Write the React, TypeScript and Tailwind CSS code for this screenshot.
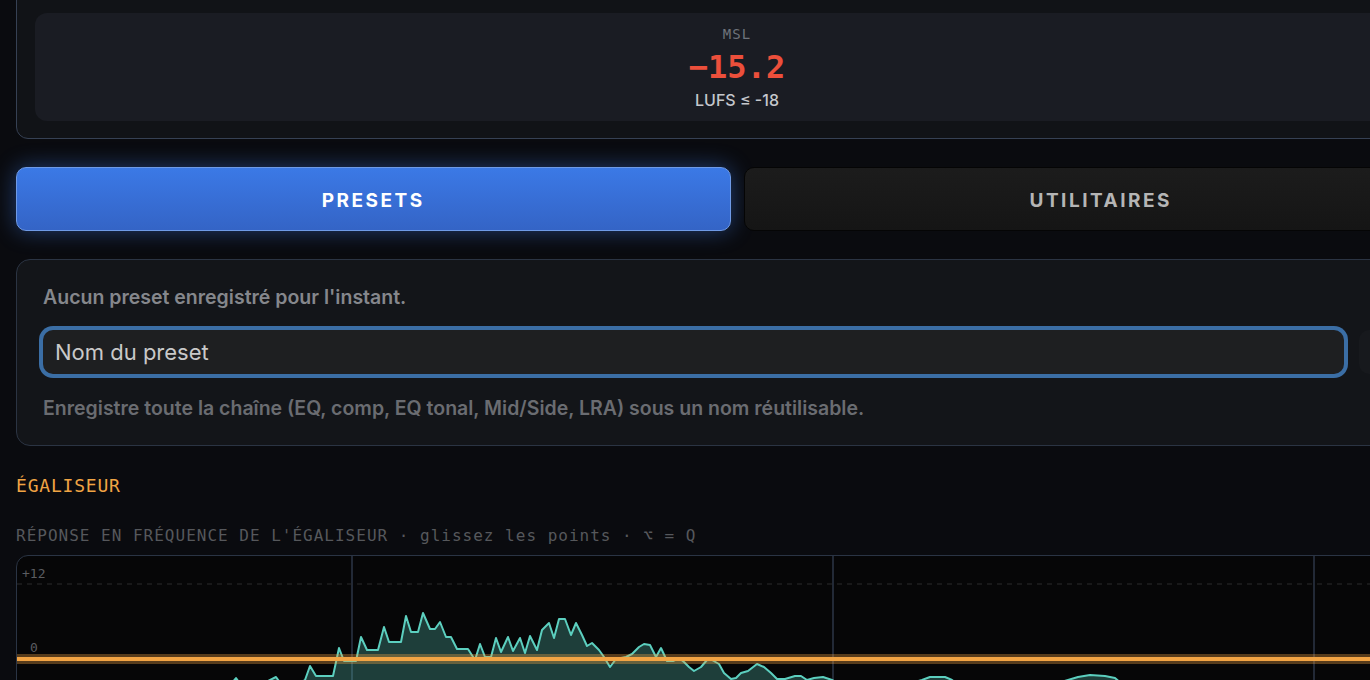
import React from "react";
import { Save } from "lucide-react";

const mono = "font-['DejaVu_Sans_Mono','Liberation_Mono',monospace]";
const sans = "font-['Inter','Noto_Sans',sans-serif]";

// spectrum trace in page-space coordinates (svg viewBox is offset to match)
const spectrum: [number, number][] = [
  [17, 700], [120, 694], [200, 688], [232, 683], [236, 678], [241, 685], [262, 684],
  [276, 677], [281, 684], [300, 683], [305, 680], [310, 666], [316, 676], [333, 676],
  [339, 648], [344, 661], [356, 661], [361, 637], [367, 650], [378, 650], [384, 627],
  [389, 642], [401, 642], [406, 616], [411, 632], [418, 632], [423, 613], [430, 629],
  [435, 629], [440, 622], [446, 637], [451, 637], [457, 649], [468, 649], [475, 660],
  [480, 644], [485, 657], [491, 657], [496, 638], [501, 652], [508, 637], [513, 651],
  [520, 638], [525, 653], [530, 636], [537, 650], [542, 630], [549, 623], [554, 638],
  [559, 619], [565, 619], [571, 635], [576, 623], [582, 635], [587, 646], [592, 643],
  [599, 650], [604, 657], [610, 667], [616, 659], [626, 657], [632, 654], [639, 647],
  [644, 644], [650, 645], [656, 657], [661, 648], [667, 661], [673, 661], [679, 658],
  [684, 662], [689, 667], [694, 671], [701, 667], [707, 660], [712, 660], [719, 664],
  [724, 673], [731, 679], [736, 678], [741, 673], [748, 671], [757, 664], [764, 667],
  [771, 673], [777, 679], [785, 679], [795, 676], [801, 676], [807, 680], [814, 678],
  [823, 677], [832, 680], [840, 684], [900, 686], [922, 680], [930, 677], [945, 677],
  [952, 680], [960, 686], [1040, 688], [1068, 680], [1078, 677], [1090, 675],
  [1105, 676], [1115, 678], [1122, 684], [1170, 690], [1250, 694], [1320, 697], [1460, 700],
];

function EqGraph() {
  const line = spectrum.map(([x, y], i) => `${i ? "L" : "M"}${x} ${y}`).join(" ");
  const area = `${line} L1460 860 L17 860 Z`;
  return (
    <div className="mt-[8px] h-[300px] overflow-hidden rounded-xl border border-[#2a3444] bg-[#060607]">
      <svg width="1440" height="300" viewBox="17 556 1440 300" className="block">
        {[352, 833, 1314].map((x) => (
          <line key={x} x1={x} y1={556} x2={x} y2={856} stroke="#2c3647" strokeWidth={1.5} />
        ))}
        <line x1={17} y1={584} x2={1460} y2={584} stroke="#2a2a2c" strokeDasharray="5 5" />
        <text x={22} y={578} fontSize={13} fill="#5a5c60" fontFamily="DejaVu Sans Mono, monospace">+12</text>
        <text x={30} y={652} fontSize={13} fill="#5a5c60" fontFamily="DejaVu Sans Mono, monospace">0</text>
        <path d={area} fill="#5ccfbf" fillOpacity={0.28} />
        <path d={line} fill="none" stroke="#5ccfbf" strokeWidth={2} strokeLinejoin="round" />
        <line x1={17} y1={659} x2={1460} y2={659} stroke="#f2a444" strokeOpacity={0.35} strokeWidth={10} />
        <line x1={17} y1={659} x2={1460} y2={659} stroke="#f2a444" strokeWidth={4} />
      </svg>
    </div>
  );
}

export default function App() {
  return (
    <div className="h-[680px] w-full overflow-hidden bg-[#0a0b0f]">
      <div className="-mt-[6px] w-[1474px] px-4">
        {/* loudness meter */}
        <div className="rounded-b-xl border border-[#364154] bg-[#111317] px-[18px] pt-[18px] pb-[17px]">
          <div className="flex h-[108px] flex-col items-center rounded-xl bg-[#1a1c23] pt-[13px]">
            <div className={`${mono} text-[14px] leading-[16px] tracking-[1px] text-[#6f737b]`}>MSL</div>
            <div className={`${mono} mt-[7px] text-[32px] font-bold leading-[36px] text-[#ec4f3b]`}>−15.2</div>
            <div className={`${sans} mt-[5px] text-[16px] font-medium leading-[20px] text-[#c5c7cc]`}>LUFS ≤ -18</div>
          </div>
        </div>

        {/* tabs */}
        <div className="mt-[28px] grid grid-cols-2 gap-[13px]">
          <button
            type="button"
            className={`${sans} h-[64px] rounded-[10px] border border-[#6f9ae6] bg-gradient-to-b from-[#3b79e6] to-[#3464c6] pt-[4px] text-[19px] font-bold tracking-[2.5px] text-white shadow-[0_0_22px_rgba(59,121,230,0.45)]`}
          >
            PRESETS
          </button>
          <button
            type="button"
            className={`${sans} h-[64px] rounded-[10px] border border-[#050505] bg-gradient-to-b from-[#1c1c1c] to-[#151515] pt-[4px] text-[19px] font-bold tracking-[2.5px] text-[#b5b5b5]`}
          >
            UTILITAIRES
          </button>
        </div>

        {/* presets panel */}
        <div className={`${sans} mt-[28px] rounded-[14px] border border-[#2b3443] bg-[#131519] px-[26px] py-[24px]`}>
          <p className="text-[19.5px] font-semibold leading-[26px] text-[#85878c]">Aucun preset enregistré pour l'instant.</p>
          <div className="mt-[20px] flex gap-[15px]">
            <input
              placeholder="Nom du preset"
              className="h-[44px] flex-1 rounded-[10px] bg-[#1e1f21] px-[12px] text-[22px] text-[#d0d0d0] placeholder:text-[#c9c9c9] outline-none ring-4 ring-[#3b6ea5]"
            />
            <button
              type="button"
              className="flex h-[44px] w-[72px] items-center justify-center rounded-[10px] bg-[#17191d] text-[#8a8c90]"
            >
              <Save size={18} />
            </button>
          </div>
          <p className="mt-[21px] text-[19.5px] font-semibold leading-[26px] text-[#6a6c71]">
            Enregistre toute la chaîne (EQ, comp, EQ tonal, Mid/Side, LRA) sous un nom réutilisable.
          </p>
        </div>

        {/* equaliser */}
        <div className={`${mono} mt-[28px] text-[18px] leading-[24px] tracking-[0.8px] text-[#f0a444]`}>ÉGALISEUR</div>
        <div className={`${mono} mt-[27px] text-[16px] leading-[22px] tracking-[1px] text-[#56585c]`}>
          RÉPONSE EN FRÉQUENCE DE L'ÉGALISEUR · glissez les points · ⌥ = Q
        </div>
        <EqGraph />
      </div>
    </div>
  );
}
